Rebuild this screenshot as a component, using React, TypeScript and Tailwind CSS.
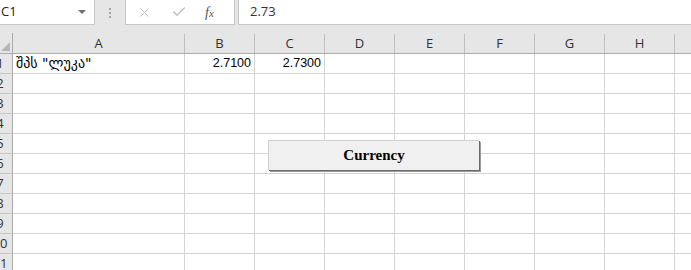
import { X, Check } from "lucide-react"

const COLS = [
  { name: "A", w: "w-[172px]" },
  { name: "B", w: "w-[70px]" },
  { name: "C", w: "w-[70px]" },
  { name: "D", w: "w-[70px]" },
  { name: "E", w: "w-[70px]" },
  { name: "F", w: "w-[70px]" },
  { name: "G", w: "w-[70px]" },
  { name: "H", w: "w-[70px]" },
  { name: "", w: "w-[16px]" },
]

const ROWS = [1, 2, 3, 4, 5, 6, 7, 8, 9, 10, 11]

const DATA: Record<string, string> = {
  A1: "შპს \"ლუკა\"",
  B1: "2.7100",
  C1: "2.7300",
}

const ui = "font-['Open_Sans','Liberation_Sans',sans-serif]"

export default function App() {
  return (
    <div className="relative w-[691px] h-[270px] overflow-hidden bg-white text-[#222]">
      {/* Formula bar */}
      <div className={`flex h-[33px] bg-[#e6e6e6] items-start ${ui}`}>
        <div className="flex items-center w-[95px] h-[25px] bg-white border-r border-b border-[#c6c6c6] pl-[1px] pr-[8px] text-[13px]">
          <span className="flex-1">C1</span>
          <span className="w-0 h-0 border-l-[4px] border-r-[4px] border-t-[4px] border-l-transparent border-r-transparent border-t-[#6f6f6f]" />
        </div>
        <div className="w-[30px] h-[25px] flex flex-col items-center justify-center gap-[2px]">
          <span className="w-[2px] h-[2px] bg-[#a6a6a6]" />
          <span className="w-[2px] h-[2px] bg-[#a6a6a6]" />
          <span className="w-[2px] h-[2px] bg-[#a6a6a6]" />
        </div>
        <div className="flex items-center w-[110px] h-[25px] bg-white border-l border-r border-b border-[#c6c6c6] pl-[11px] gap-[19px]">
          <X size={15} strokeWidth={1.5} className="text-[#bdbdbd]" />
          <Check size={16} strokeWidth={2} className="text-[#bdbdbd]" />
          <span className="font-['Liberation_Serif',serif] italic text-[14px] text-[#555] -ml-[1px]">
            f<span className="text-[11px]">x</span>
          </span>
        </div>
        <div className="flex-1 ml-[3px] h-[25px] bg-white border-l border-b border-[#c6c6c6] flex items-center pl-[11px] text-[13px] text-[#333]">
          2.73
        </div>
      </div>

      {/* Column headers */}
      <div className={`flex h-[21px] bg-[#e6e6e6] border-b border-[#ababab] text-[13px] text-[#333] ${ui}`}>
        <div className="w-[13px] h-full border-r border-[#ababab] flex items-end justify-end pr-[2px] pb-[2px]">
          <svg width="9" height="9" viewBox="0 0 9 9" className="block">
            <polygon points="9,0 9,9 0,9" fill="#b6b6b6" />
          </svg>
        </div>
        {COLS.map((c) => (
          <div key={c.name || "i"} className={`${c.w} shrink-0 flex items-center justify-center pt-[1px] ${c.name ? "border-r" : ""} border-[#c0c0c0] [border-image:linear-gradient(to_bottom,transparent_2px,#c0c0c0_2px)_1]`}>
            {c.name}
          </div>
        ))}
      </div>

      {/* Rows */}
      {ROWS.map((r) => (
        <div key={r} className="flex h-[20px]">
          <div className={`w-[13px] shrink-0 overflow-hidden bg-[#e6e6e6] border-r border-b border-r-[#ababab] border-b-[#c8c8c8] ${ui} text-[13px] text-[#333]`}>
            <div className="w-[40px] -ml-[20px] h-full flex items-center justify-center">{r}</div>
          </div>
          {COLS.map((c) => {
            const v = DATA[c.name + r]
            const isText = c.name === "A"
            return (
              <div
                key={c.name || "i"}
                className={`${c.w} shrink-0 border-b border-[#d4d4d4] ${c.name ? "border-r" : ""} flex items-center whitespace-nowrap ${isText ? "justify-start pl-[3px] font-['DejaVu_Sans','Noto_Sans',sans-serif] text-[14px]" : "justify-end pr-[3px] font-['Liberation_Sans',sans-serif] text-[12.5px]"} text-black`}
              >
                {v}
              </div>
            )
          })}
        </div>
      ))}

      {/* Form button */}
      <button className="absolute left-[268px] top-[140px] w-[211px] h-[30px] bg-[#f0f0f0] border-t border-l border-[#d0d0d0] shadow-[1px_1px_0_#6a6a6a,2px_2px_0_#9a9a9a] font-['Liberation_Serif',serif] font-bold text-[15px] text-black flex items-center justify-center">
        Currency
      </button>
    </div>
  )
}
